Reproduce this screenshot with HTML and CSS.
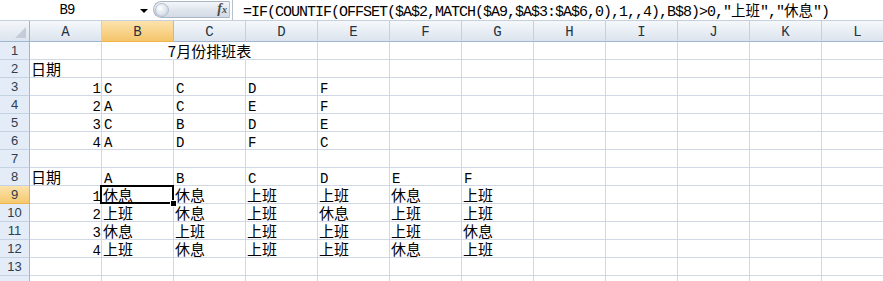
FILE: index.html
```html
<!DOCTYPE html>
<html lang="zh-CN">
<head>
<meta charset="utf-8">
<title>7月份排班表</title>
<link rel="stylesheet" href="styles.css">
</head>
<body>
<div class="fbar">
  <div class="namebox"><span class="nb-text">B9</span><span class="nb-arrow"></span></div>
  <div class="pill"><span class="knob"></span><span class="fx">f<span class="fxs">x</span></span></div>
  <div class="formula">=IF(COUNTIF(OFFSET($A$2,MATCH($A9,$A$3:$A$6,0),1,,4),B$8)&gt;0,"<span class="fcj">上班</span>","<span class="fcj">休息</span>")</div>
</div>
<div class="sheet">
  <div class="corner"><span class="tri"></span></div>
  <div class="ch">A</div><div class="ch sel">B</div><div class="ch">C</div><div class="ch">D</div><div class="ch">E</div><div class="ch">F</div><div class="ch">G</div><div class="ch">H</div><div class="ch">I</div><div class="ch">J</div><div class="ch">K</div><div class="ch">L</div>

  <div class="rh">1</div>
  <div class="c"></div><div class="c nr"></div><div class="c nr title"><span>7月份排班表</span></div><div class="c"></div><div class="c"></div><div class="c"></div><div class="c"></div><div class="c"></div><div class="c"></div><div class="c"></div><div class="c"></div><div class="c"></div>

  <div class="rh">2</div>
  <div class="c cj">日期</div><div class="c"></div><div class="c"></div><div class="c"></div><div class="c"></div><div class="c"></div><div class="c"></div><div class="c"></div><div class="c"></div><div class="c"></div><div class="c"></div><div class="c"></div>

  <div class="rh">3</div>
  <div class="c num">1</div><div class="c">C</div><div class="c">C</div><div class="c">D</div><div class="c">F</div><div class="c"></div><div class="c"></div><div class="c"></div><div class="c"></div><div class="c"></div><div class="c"></div><div class="c"></div>

  <div class="rh">4</div>
  <div class="c num">2</div><div class="c">A</div><div class="c">C</div><div class="c">E</div><div class="c">F</div><div class="c"></div><div class="c"></div><div class="c"></div><div class="c"></div><div class="c"></div><div class="c"></div><div class="c"></div>

  <div class="rh">5</div>
  <div class="c num">3</div><div class="c">C</div><div class="c">B</div><div class="c">D</div><div class="c">E</div><div class="c"></div><div class="c"></div><div class="c"></div><div class="c"></div><div class="c"></div><div class="c"></div><div class="c"></div>

  <div class="rh">6</div>
  <div class="c num">4</div><div class="c">A</div><div class="c">D</div><div class="c">F</div><div class="c">C</div><div class="c"></div><div class="c"></div><div class="c"></div><div class="c"></div><div class="c"></div><div class="c"></div><div class="c"></div>

  <div class="rh">7</div>
  <div class="c"></div><div class="c"></div><div class="c"></div><div class="c"></div><div class="c"></div><div class="c"></div><div class="c"></div><div class="c"></div><div class="c"></div><div class="c"></div><div class="c"></div><div class="c"></div>

  <div class="rh">8</div>
  <div class="c cj">日期</div><div class="c">A</div><div class="c">B</div><div class="c">C</div><div class="c">D</div><div class="c">E</div><div class="c">F</div><div class="c"></div><div class="c"></div><div class="c"></div><div class="c"></div><div class="c"></div>

  <div class="rh sel">9</div>
  <div class="c num">1</div><div class="c cj active">休息</div><div class="c cj">休息</div><div class="c cj">上班</div><div class="c cj">上班</div><div class="c cj">休息</div><div class="c cj">上班</div><div class="c"></div><div class="c"></div><div class="c"></div><div class="c"></div><div class="c"></div>

  <div class="rh">10</div>
  <div class="c num">2</div><div class="c cj">上班</div><div class="c cj">休息</div><div class="c cj">上班</div><div class="c cj">休息</div><div class="c cj">上班</div><div class="c cj">上班</div><div class="c"></div><div class="c"></div><div class="c"></div><div class="c"></div><div class="c"></div>

  <div class="rh">11</div>
  <div class="c num">3</div><div class="c cj">休息</div><div class="c cj">上班</div><div class="c cj">上班</div><div class="c cj">上班</div><div class="c cj">上班</div><div class="c cj">休息</div><div class="c"></div><div class="c"></div><div class="c"></div><div class="c"></div><div class="c"></div>

  <div class="rh">12</div>
  <div class="c num">4</div><div class="c cj">上班</div><div class="c cj">休息</div><div class="c cj">上班</div><div class="c cj">上班</div><div class="c cj">休息</div><div class="c cj">上班</div><div class="c"></div><div class="c"></div><div class="c"></div><div class="c"></div><div class="c"></div>

  <div class="rh">13</div>
  <div class="c"></div><div class="c"></div><div class="c"></div><div class="c"></div><div class="c"></div><div class="c"></div><div class="c"></div><div class="c"></div><div class="c"></div><div class="c"></div><div class="c"></div><div class="c"></div>

  <div class="rh"></div>
  <div class="c"></div><div class="c"></div><div class="c"></div><div class="c"></div><div class="c"></div><div class="c"></div><div class="c"></div><div class="c"></div><div class="c"></div><div class="c"></div><div class="c"></div><div class="c"></div>
</div>
</body>
</html>
```
FILE: styles.css
```css
* { box-sizing: border-box; }
html, body { margin: 0; padding: 0; background: #fff; }
body { width: 883px; height: 281px; overflow: hidden; }

/* formula bar */
.fbar {
  display: flex;
  height: 21px;
  background: #fff;
  border-bottom: 1px solid #c6d0dc;
}
.namebox {
  width: 153px;
  display: flex;
  align-items: center;
}
.nb-text {
  width: 134px;
  text-align: center;
  font: 14px/14px "Liberation Mono", monospace;
  letter-spacing: -0.9px;
  color: #000;
}
.nb-arrow {
  width: 0; height: 0;
  border-left: 4px solid transparent;
  border-right: 4px solid transparent;
  border-top: 4px solid #000;
  margin-left: 6px;
  margin-top: 1px;
}
.pill {
  width: 77px;
  height: 17px;
  margin-top: 1px;
  border: 1px solid #a9b6c6;
  border-right: 1px solid #b6c2d0;
  border-radius: 9px 0 0 9px;
  background: linear-gradient(#f4f6f9, #dfe5ec 55%, #d3dbe5);
  display: flex;
  align-items: center;
  justify-content: space-between;
  padding: 0 2px 0 1px;
}
.knob {
  width: 14px; height: 14px;
  border-radius: 50%;
  background: radial-gradient(circle at 35% 35%, #ffffff, #d9e1ea 60%, #b8c4d2);
  border: 1px solid #b4c0ce;
}
.fx {
  font: italic bold 14px/14px "Liberation Serif", serif;
  color: #4b4b4b;
}
.fxs { font-size: 10px; }
.formula {
  flex: 1;
  border-left: 1px solid #b6c2d0;
  margin-left: 2px;
  padding-left: 10px;
  font: 15px/20px "Liberation Mono", monospace;
  letter-spacing: -1px;
  white-space: nowrap;
  color: #000;
}
.fcj { font-family: "Noto Sans CJK SC", sans-serif; font-size: 14.5px; letter-spacing: 0; }

/* sheet */
.sheet {
  display: grid;
  grid-template-columns: 30px repeat(12, 72px);
  grid-template-rows: 21px;
  grid-auto-rows: 18px;
}
.corner {
  background: linear-gradient(#f3f6fa, #dde4ee);
  border-right: 1px solid #9eb6ce;
  border-bottom: 1px solid #9eb6ce;
  position: relative;
}
.tri {
  position: absolute;
  right: 3px; bottom: 3px;
  width: 11px; height: 11px;
  background: #c3cdd9;
  clip-path: polygon(100% 0, 100% 100%, 0 100%);
}
.ch {
  background: linear-gradient(#f5f8fb, #e6ecf3 60%, #dce3ed);
  border-right: 1px solid #c5d1de;
  border-bottom: 1px solid #9eb6ce;
  display: flex;
  align-items: center;
  justify-content: center;
  font: 14px/14px "Liberation Mono", monospace;
  color: #27323f;
  padding-top: 1px;
}
.ch.sel { background: linear-gradient(#fbe3ad, #f8d185 60%, #f3c56b); border-right-color: #f0b44a; border-bottom-color: #f0b44a; }
.rh {
  background: #e4ecf7;
  border-right: 1px solid #9eb6ce;
  border-bottom: 1px solid #c5d2e2;
  display: flex;
  align-items: center;
  justify-content: center;
  font: 13px/14px "Liberation Sans", sans-serif;
  color: #2e3c4e;
}
.rh.sel { background: linear-gradient(#fbe3ad, #f5c96f); border-bottom-color: #f0b44a; }

.c {
  border-right: 1px solid #d0d7e5;
  border-bottom: 1px solid #d0d7e5;
  display: flex;
  align-items: flex-end;
  padding: 0 2px 0 2px;
  font: 14px/11px "Liberation Mono", monospace;
  letter-spacing: -0.9px;
  color: #000;
  white-space: nowrap;
  min-width: 0;
}
.c.nr { border-right-color: transparent; }
.c.num { justify-content: flex-end; padding-right: 1px; }
.c.cj { font: 15px/15px "Noto Sans CJK SC", sans-serif; letter-spacing: 0; padding-bottom: 1px; padding-left: 1px; }
.title {
  justify-content: center;
  overflow: visible;
  font: 15px/15px "Noto Sans CJK SC", sans-serif;
  letter-spacing: 0;
  padding-bottom: 1px;
}
.title span { flex: none; }
.active { position: relative; }
.active::after {
  content: "";
  position: absolute;
  left: -2px; top: -1px; right: -1px; bottom: -1px;
  border: 2px solid #000;
}
.active::before {
  content: "";
  position: absolute;
  right: -3px; bottom: -3px;
  width: 5px; height: 5px;
  background: #000;
  outline: 1px solid #fff;
  z-index: 2;
}
```
